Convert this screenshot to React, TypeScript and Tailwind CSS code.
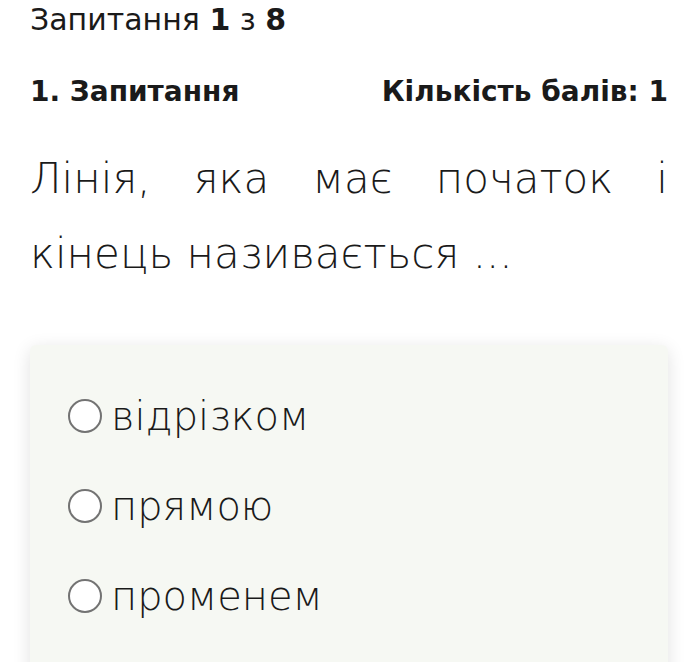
import React from 'react';

const options = ['відрізком', 'прямою', 'променем'];

export default function App() {
  return (
    <div className="min-h-screen bg-white px-[30px] text-[#1a1a1a]" style={{ fontFamily: '"DejaVu Sans", "Open Sans", sans-serif' }}>
      {/* Header */}
      <div className="text-[30px] leading-[40px] font-normal">
        Запитання <span className="font-bold">1</span> з <span className="font-bold">8</span>
      </div>

      <div className="mt-[34px] flex items-center justify-between text-[28px] font-bold leading-[36px]">
        <span>1. Запитання</span>
        <span>Кількість балів: 1</span>
      </div>

      {/* Question */}
      <p className="mt-[31px] text-[42px] font-extralight leading-[75px] text-justify">
        Лінія, яка має початок і кінець називається ...
      </p>

      {/* Answers */}
      <div className="mt-[54px] rounded-md bg-[#f6f8f3] pl-[38px] pt-[51px] pb-[80px] shadow-[0_4px_18px_rgba(0,0,0,0.12)]">
        <div className="flex flex-col gap-[50px]">
          {options.map((o) => (
            <label key={o} className="flex items-center gap-[9px] text-[40px] font-extralight leading-[40px]">
              <span className="h-[34px] w-[34px] shrink-0 rounded-full border-2 border-[#737373] bg-white" />
              <span>{o}</span>
            </label>
          ))}
        </div>
      </div>
    </div>
  );
}
